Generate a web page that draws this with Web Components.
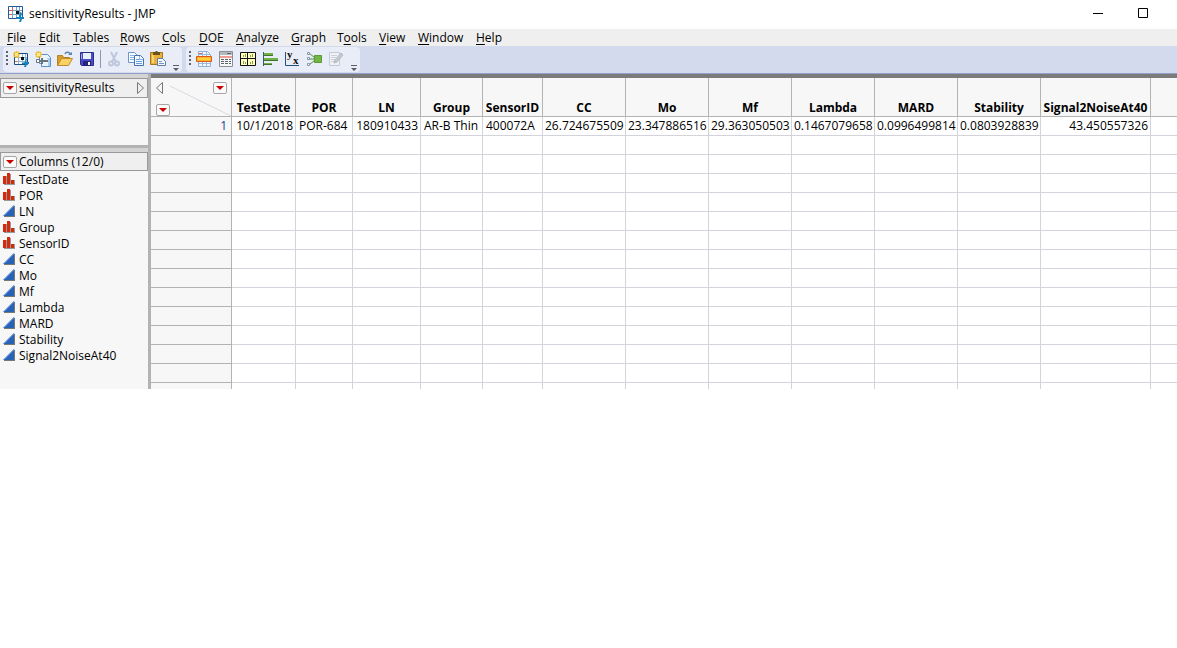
<!DOCTYPE html>
<html lang="en">
<head>
<meta charset="utf-8">
<title>sensitivityResults - JMP</title>
<style>
  body { margin: 0; background: #fff; color: #000; font: 12px/16px "Open Sans", "Noto Sans", sans-serif; }
</style>
</head>
<body>
<jmp-window>
  <title-bar slot="title">sensitivityResults - JMP</title-bar>
  <menu-bar slot="menu"></menu-bar>
  <tool-strip slot="tools">
    <tool-group icons="newtable,newscript,open,save,|,cut,copy,paste"></tool-group>
    <tool-group icons="datatable,summary,tabulate,distribution,fityx,fitmodel,edit"></tool-group>
  </tool-strip>
  <side-panel slot="side" class="info" arrow>sensitivityResults</side-panel>
  <side-panel slot="side">Columns (12/0)<column-list slot="body"></column-list></side-panel>
  <data-grid slot="grid"></data-grid>
</jmp-window>

<script>
const ICONS = {
  app: '<path fill="#fff" stroke="#1f5c99" d="M.5.5h14v12H.5z"/><path stroke="#6fa6cf" fill="none" d="M4.500 1v11M8.500 1v11M11.500 1v11M1 4.500h13M1 8.500h13"/><path fill="#e8594f" d="M1 4h4v1H1zM4 1h1v3H4zM2 8h2v1H2z"/><path fill="#111" d="M8 5h3v3H8z"/><path fill="#1682b8" d="m12 6 2 1-1 4h3v2h-2l-1 3h-2l1-3H8v-2h3z"/>',
  newtable: '<path fill="#fff" stroke="#174f83" d="M1.500 2.500h13v11h-13z"/><path stroke="#8fb4d6" fill="none" d="M5.500 3v10M9.500 3v10M12.500 3v10M2 6.500h12M2 10.500h12"/><path fill="#e8594f" d="M2 10h2v1H2z"/><path fill="#111" d="M8 6h3v3H8z"/><path fill="#1682b8" d="m13 7 1 1-1 3h3v2h-2l-1 3h-2l1-3H9v-1l3-1z"/><path stroke="#f2bd25" stroke-width="1.500" d="M3.500 0v7M0 3.500h7M1 1l5 5M6 1 1 6"/><path fill="#ffe88a" d="M2 2h3v3H2z"/>',
  newscript: '<path fill="#e9f4fd" stroke="#5d90c4" d="M4.500 3.500h8l3 3v9h-9v-3h-2z"/><path fill="#a9cdec" d="M12 4v3h3v8h-2V8h-1z"/><path fill="#fff" stroke="#69747e" d="M1.500 8.500h3v3h-3z"/><path stroke="#69747e" stroke-width="2" fill="none" d="M4 10h9M7 7v6"/><path stroke="#f2bd25" stroke-width="1.500" d="M3.500 0v7M0 3.500h7M1 1l5 5M6 1 1 6"/><path fill="#ffe88a" d="M2 2h3v3H2z"/>',
  open: '<path fill="#d99c24" stroke="#b5832a" d="M.5 14.500v-10h5l1 2h6v3"/><path fill="#fbd064" stroke="#bd8c2b" d="m.5 14.500 4-7h11l-4 7z"/><path fill="none" stroke="#5d86ad" stroke-width="1.500" d="M8 3c1-3 5-2 6 1"/><path fill="#5d86ad" d="M11 4h4V1z"/>',
  save: '<path fill="#4a4ac6" stroke="#2d2d8c" d="M1.500 1.500h13v13h-12l-1-1z"/><path fill="#e8f2ff" d="M4 2h8v6H4z"/><path fill="#9da5ed" d="M2 3h1v5H2z"/><path fill="#242478" d="M4 10h8v5H4z"/><path fill="#fff" d="M9 11h2v3H9z"/>',
  cut: '<g fill="none" stroke="#bdc8da" stroke-width="2"><path d="m5 1 5 10M11 1 6 11"/><circle cx="5" cy="12.500" r="2"/><circle cx="11" cy="12.500" r="2"/></g>',
  copy: '<path fill="#f5faff" stroke="#6a96c9" d="M.5 1.500h6l3 3v7h-9z"/><path stroke="#8fb6e2" d="M2 4.500h4M2 6.500h5M2 8.500h5"/><path fill="#f5faff" stroke="#4571b3" d="M6.500 4.500h6l3 3v7h-9z"/><path fill="#8bb4e9" d="M12 5v3h3v1h-4V5z"/><path stroke="#6b9bdb" d="M8 8.500h3M8 10.500h6M8 12.500h6"/>',
  paste: '<path fill="#e9b13a" stroke="#a5741f" d="M.5 1.500h12v12H.5z"/><path fill="#f8d567" d="M2 4h2v8H2z"/><path fill="#6d541b" d="M3 1h2l1-1h1l1 1h2v3H3z"/><path fill="#f5faff" stroke="#5a7aa8" d="M7.500 7.500h5l3 3v4h-8z"/><path stroke="#7394c3" d="M9 10.500h3M9 12.500h5"/>',
  datatable: '<path fill="#f2f7fc" stroke="#8eb2d8" d="M2.500.5h9l3 3v12h-12z"/><path stroke="#9bb9dc" fill="none" d="M6.500 1v14M10.500 1v14M3 3.500h11M3 12.500h11"/><path fill="#ffb326" stroke="#dd5a1c" d="M.5 5.500h15v5H.5z"/><path fill="#ffd23c" d="M2 7h12v2H2z"/><path fill="#df6659" d="M3 2h3v1H3z"/>',
  summary: '<path fill="#f7f7f7" stroke="#8a8f96" d="M1.500.5h13v15h-13z"/><path fill="#b4bac1" d="M2 1h12v3H2z"/><path fill="#5b6168" d="M9 2h4v1H9z"/><path fill="#ee9c94" d="M2 5h12v2H2z"/><path stroke="#59636e" d="M3 8.500h3M7 8.500h3M11 8.500h2M3 10.500h3M7 10.500h3M11 10.500h2M3 12.500h3M7 12.500h3M11 12.500h2"/>',
  tabulate: '<path fill="#ffffc3" stroke="#111" d="M.5 1.500h15v13H.5z"/><path fill="#111" d="M7 1h1v14H7zM0 7h16v1H0z"/><path stroke="#7fa03a" d="M3.500 4v2M5.500 3v3M10.500 4v2M12.500 3v3M3.500 10v3M5.500 11v2M10.500 11v2M12.500 10v3"/>',
  distribution: '<path stroke="#345a7a" d="M1.500 1v14"/><path fill="#72b044" d="M2 2h9v3H2zM2 7h14v3H2zM2 12h8v2H2z"/><path stroke="#3c752b" d="M2 4.500h9M2 9.500h14M2 13.500h8"/>',
  fityx: '<path fill="none" stroke="#25527b" d="M1.500 1v13.500H15"/><g font-family="Liberation Serif, serif" font-weight="700" font-size="11" fill="#111"><text x="3" y="7">y</text><text x="9" y="13">x</text></g>',
  fitmodel: '<path stroke="#518c45" fill="none" d="m3 2 6 5M3 8h6M3 14l6-5"/><path fill="#72b644" stroke="#5a9a35" d="M8.500 4.500h7v7h-7z"/><path fill="#fff" stroke="#8398ae" d="M1.500 1.500h2v2h-2zM1.500 6.500h2v2h-2zM1.500 12.500h2v2h-2z"/>',
  edit: '<path fill="#f0f1f5" stroke="#c4cad4" d="M1.500 1.500h10v13h-10z"/><path stroke="#ccd1da" d="M3 4.500h6M3 6.500h5M3 8.500h4M3 10.500h3"/><path fill="#c6cbd3" stroke="#b3b9c3" d="m6 12 1-3 6-7 2 2-6 7z"/>',
  nominal: '<path fill="#999" d="M1 3h3V1h4v6h4v5H1z"/><path fill="#d22a0e" d="M0 3h3v8H0zM4 0h3v11H4zM8 7h3v4H8z"/>',
  continuous: '<path fill="#777" d="M1 12v-1L11 1h1v11z"/><path fill="#2862b4" d="M0 11 11 0v11z"/><path stroke="#76aaf0" d="m1 10.500 10-10"/>'
};
const svg = (name, size = 16) => `<svg width="${size}" height="${size}" viewBox="0 0 ${size} ${size}" aria-hidden="true">${ICONS[name]}</svg>`;

class Base extends HTMLElement {
  connectedCallback() {
    if (!this.shadowRoot) this.attachShadow({ mode: 'open' }).innerHTML = this.render();
  }
}

customElements.define('jmp-window', class extends Base {
  render() {
    return `<style>
      :host { display: block; }
      main { display: grid; grid-template-columns: 151px minmax(0, 1fr); }
      aside { background: #f7f7f7; border-right: 3px solid #b3b3b3; }
      section { border-top: 4px solid #7b7b7b; }
    </style>
    <header><slot name="title"></slot><slot name="menu"></slot><slot name="tools"></slot></header>
    <main><aside><slot name="side"></slot></aside><section><slot name="grid"></slot></section></main>`;
  }
});

customElements.define('title-bar', class extends Base {
  render() {
    return `<style>
      :host { display: flex; align-items: center; height: 29px; padding-left: 8px; }
      svg { display: block; }
      .name { flex: 1; padding: 0 0 1px 5px; }
      .app { padding-bottom: 1px; }
      button { width: 45px; height: 26px; padding: 0; border: 0; background: none; display: grid; place-items: center; }
      .controls { display: flex; align-self: start; padding-right: 12px; }
    </style>
    <span class="app">${svg('app')}</span><span class="name"><slot></slot></span>
    <div class="controls">
      <button aria-label="Minimize"><svg width="10" height="10"><path stroke="#000" d="M0 5.500h10"/></svg></button>
      <button aria-label="Maximize"><svg width="10" height="10"><path stroke="#000" fill="none" d="M.5.5h9v9h-9z"/></svg></button>
    </div>`;
  }
});

customElements.define('menu-bar', class extends Base {
  render() {
    const items = ['_File', '_Edit', '_Tables', '_Rows', '_Cols', '_DOE', '_Analyze', '_Graph', 'T_ools', '_View', '_Window', '_Help'];
    return `<style>
      :host { display: block; background: #efefef; }
      nav { display: grid; height: 17px; padding-left: 7px;
        grid-template-columns: 32px 34px 47px 42px 37px 37px 55px 46px 42px 39px 58px auto; }
      button { border: 0; padding: 0; background: none; font: inherit; color: inherit; text-align: left; line-height: 17px; white-space: nowrap; }
      u { text-underline-offset: 2px; text-decoration-skip-ink: none; }
    </style>
    <nav>${items.map(t => `<button>${t.replace(/_(.)/, '<u>$1</u>')}</button>`).join('')}</nav>`;
  }
});

customElements.define('tool-strip', class extends Base {
  render() {
    return `<style>
      :host { display: flex; gap: 4px; padding: 1px 3px; background: #d4daed; border-bottom: 1px solid #929dc8; }
    </style><slot></slot>`;
  }
});

customElements.define('tool-group', class extends Base {
  render() {
    const parts = this.getAttribute('icons').split(',').map(n =>
      n === '|' ? '<i class="sep"></i>' : `<button aria-label="${n}">${svg(n)}</button>`).join('');
    return `<style>
      :host { display: flex; align-items: start; height: 25px; border-radius: 4px; background: #e9edf8; }
      svg { display: block; overflow: visible; }
      .grip { margin: 3px 2px 0 3px; }
      button { width: 22px; height: 24px; padding: 0; border: 0; background: none; display: grid; place-items: center; }
      .sep { width: 1px; height: 18px; margin: 3px 2px 0; background: #8d97b5; }
      .more { width: 13px; align-items: end; }
    </style>
    <svg class="grip" width="2" height="16"><path fill="#60636c" d="M0 1h2v2H0zM0 5h2v2H0zM0 9h2v2H0zM0 13h2v2H0z"/></svg>
    ${parts}
    <button class="more" aria-label="More"><svg width="6" height="6"><path fill="#5c5f67" d="M0 0h6v1H0zM0 3h6L3 6z"/></svg></button>`;
  }
});

customElements.define('red-triangle', class extends Base {
  render() {
    return `<style>
      :host { display: block; }
      button { display: grid; place-items: center; width: 14px; height: 12px; padding: 0; border: 1px solid #a6a6a6; border-radius: 2px; background: #fafafa; }
      svg { display: block; }
    </style><button aria-label="Options"><svg width="8" height="4"><path fill="#c80000" d="M0 0h8L4 4z"/></svg></button>`;
  }
});

customElements.define('side-panel', class extends Base {
  render() {
    const arrow = this.hasAttribute('arrow')
      ? '<svg width="8" height="12"><path fill="none" stroke="#777" d="M.5.5v11l6-5.500z"/></svg>' : '';
    return `<style>
      :host { display: block; border-top: 4px solid #d4d4d4; }
      :host(.info) { height: 67px; border-bottom: 3px solid #b3b3b3; }
      h2 { display: flex; align-items: center; gap: 2px; height: 18px; margin: 0; padding: 0 2px; border: 1px solid #999; background: #efefef; font: inherit; white-space: nowrap; }
      :host(:not(.info)) h2 { height: 17px; }
      span { flex: 1; }
    </style>
    <h2><red-triangle></red-triangle><span><slot></slot></span>${arrow}</h2><slot name="body"></slot>`;
  }
});

customElements.define('column-list', class extends Base {
  render() {
    const cols = ['TestDate', 'POR', 'LN', 'Group', 'SensorID', 'CC', 'Mo', 'Mf', 'Lambda', 'MARD', 'Stability', 'Signal2NoiseAt40'];
    const nominal = ['TestDate', 'POR', 'Group', 'SensorID'];
    return `<style>
      :host { display: block; }
      ul { list-style: none; margin: 0; padding: 1px 3px 24px; }
      li { display: flex; align-items: center; gap: 4px; height: 16px; }
      svg { display: block; margin-bottom: 2px; }
    </style>
    <ul>${cols.map(c => `<li>${svg(nominal.includes(c) ? 'nominal' : 'continuous', 12)}<span>${c}</span></li>`).join('')}</ul>`;
  }
});

customElements.define('data-grid', class extends Base {
  render() {
    const cols = [
      ['TestDate', 64, '10/1/2018', 'r'], ['POR', 57, 'POR-684'], ['LN', 68, '180910433', 'r'], ['Group', 62, 'AR-B Thin'],
      ['SensorID', 60, '400072A'], ['CC', 83, '26.724675509', 'r'], ['Mo', 83, '23.347886516', 'r'], ['Mf', 83, '29.363050503', 'r'],
      ['Lambda', 83, '0.1467079658', 'r'], ['MARD', 83, '0.0996499814', 'r'], ['Stability', 83, '0.0803928839', 'r'],
      ['Signal2NoiseAt40', 110, '43.450557326', 'r']
    ];
    const blank = '<tr><th></th>' + '<td></td>'.repeat(cols.length + 1) + '</tr>';
    return `<style>
      :host { display: block; overflow: hidden; }
      table { width: 100%; table-layout: fixed; border-collapse: separate; border-spacing: 0; }
      th, td { box-sizing: border-box; height: 19px; padding: 0 3px; border: solid #d3d3dc; border-width: 0 1px 1px 0; font-weight: 400; line-height: 16px; white-space: nowrap; text-align: left; }
      th { background: #f7f7f7; border-color: #b3b3b3; }
      thead th { height: 39px; padding: 0; vertical-align: bottom; text-align: center; font-weight: 700; }
      tbody th { text-align: right; color: #1d3f94; padding-right: 4px; }
      td.r { text-align: right; padding: 0 2px; }
      tr > :last-child { border-right: 0; }
      tbody tr:last-child > * { height: 6px; border-bottom: 0; }
      .corner { position: relative; display: grid; grid-template-columns: auto auto; justify-content: space-between; align-content: space-between; height: 36px; padding: 2px 4px 0 5px; box-sizing: border-box; }
      .corner svg { display: block; }
      .corner .diag { position: absolute; right: 0; bottom: 0; }
    </style>
    <table>
      <colgroup><col style="width:81px">${cols.map(c => `<col style="width:${c[1]}px">`).join('')}<col></colgroup>
      <thead><tr><th><div class="corner">
        <svg class="diag" width="61" height="30"><path stroke="#d8d8e0" d="m0 0 61 30"/></svg>
        <svg width="8" height="12"><path fill="none" stroke="#777" d="M6.500.5v11L.5 6z"/></svg><red-triangle></red-triangle><red-triangle></red-triangle>
      </div></th>${cols.map(c => `<th scope="col">${c[0]}</th>`).join('')}<th></th></tr></thead>
      <tbody><tr><th scope="row">1</th>${cols.map(c => `<td class="${c[3] || ''}">${c[2]}</td>`).join('')}<td></td></tr>
      ${blank.repeat(14)}</tbody>
    </table>`;
  }
});
</script>
</body>
</html>
